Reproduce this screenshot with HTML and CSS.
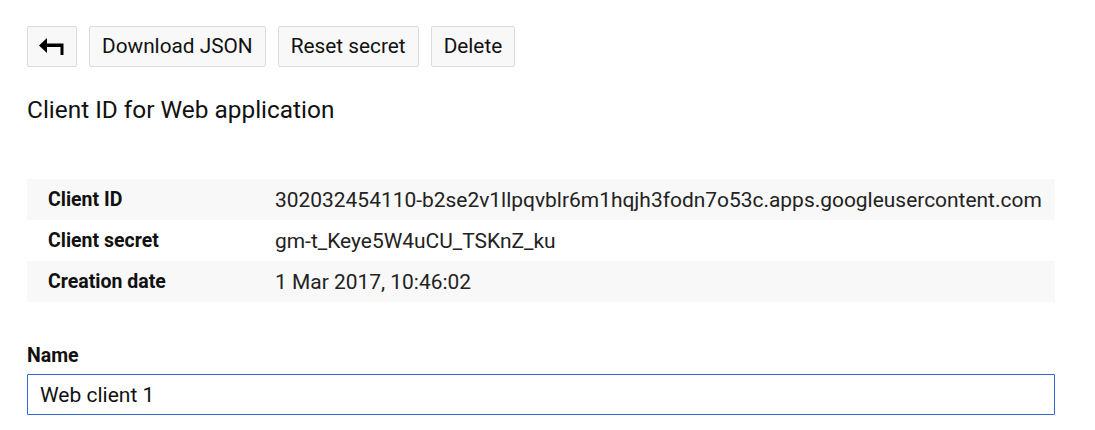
FILE: index.html
```html
<!DOCTYPE html>
<html>
<head>
<meta charset="utf-8">
<link rel="stylesheet" href="styles.css">
</head>
<body>
<div class="page">
  <div class="toolbar">
    <button class="btn btn-icon" aria-label="Back">
      <svg width="26" height="18" viewBox="0 0 26 18">
        <path d="M0 7.5 L8 0 L8 5.5 L24.5 5.5 L24.5 17 L21.5 17 L21.5 9 L8 9 L8 15 Z" fill="#000"/>
      </svg>
    </button>
    <button class="btn">Download JSON</button>
    <button class="btn">Reset secret</button>
    <button class="btn">Delete</button>
  </div>
  <h1 class="title">Client ID for Web application</h1>
  <div class="details">
    <div class="row shaded"><div class="label">Client ID</div><div class="value">302032454110-b2se2v1llpqvblr6m1hqjh3fodn7o53c.apps.googleusercontent.com</div></div>
    <div class="row"><div class="label">Client secret</div><div class="value">gm-t_Keye5W4uCU_TSKnZ_ku</div></div>
    <div class="row shaded"><div class="label">Creation date</div><div class="value">1 Mar 2017, 10:46:02</div></div>
  </div>
  <div class="field">
    <label class="field-label">Name</label>
    <div class="input">Web client 1</div>
  </div>
</div>
</body>
</html>
```
FILE: styles.css
```css
html, body {
  margin: 0;
  padding: 0;
  background: #fff;
}
body {
  font-family: Roboto, "Noto Sans", sans-serif;
  color: #212121;
}
.page {
  padding: 26px 40px 0 27px;
  width: 1028px;
}
.toolbar {
  display: flex;
  gap: 12px;
}
.btn {
  height: 41px;
  box-sizing: border-box;
  padding: 0 12px 1px;
  background: #f8f8f8;
  border: 1px solid #dcdcdc;
  border-radius: 2px;
  font-family: Roboto, sans-serif;
  font-size: 20.8px;
  color: #111;
  display: flex;
  align-items: center;
  justify-content: center;
}
.btn-icon {
  width: 50px;
  padding: 0;
}
.btn-icon svg {
  display: block;
}
.title {
  margin: 27px 0 0 0;
  font-weight: 400;
  font-size: 24.4px;
  line-height: 32px;
  color: #111;
}
.details {
  margin-top: 53px;
}
.row {
  display: flex;
  height: 41px;
  align-items: center;
}
.shaded {
  background: #f8f8f8;
}
.label {
  flex: none;
  width: 227px;
  padding-left: 21px;
  font-size: 19.5px;
  font-weight: 700;
  color: #111;
}
.value {
  font-size: 20.95px;
  white-space: nowrap;
  color: #222;
}
.field {
  margin-top: 43px;
}
.field-label {
  display: block;
  font-size: 19.5px;
  font-weight: 700;
  color: #111;
  line-height: 22px;
}
.input {
  margin-top: 7px;
  height: 41px;
  box-sizing: border-box;
  border: 1px solid #3367d6;
  border-radius: 1px;
  padding: 0 12px;
  display: flex;
  align-items: center;
  font-size: 21px;
  color: #111;
}
```
